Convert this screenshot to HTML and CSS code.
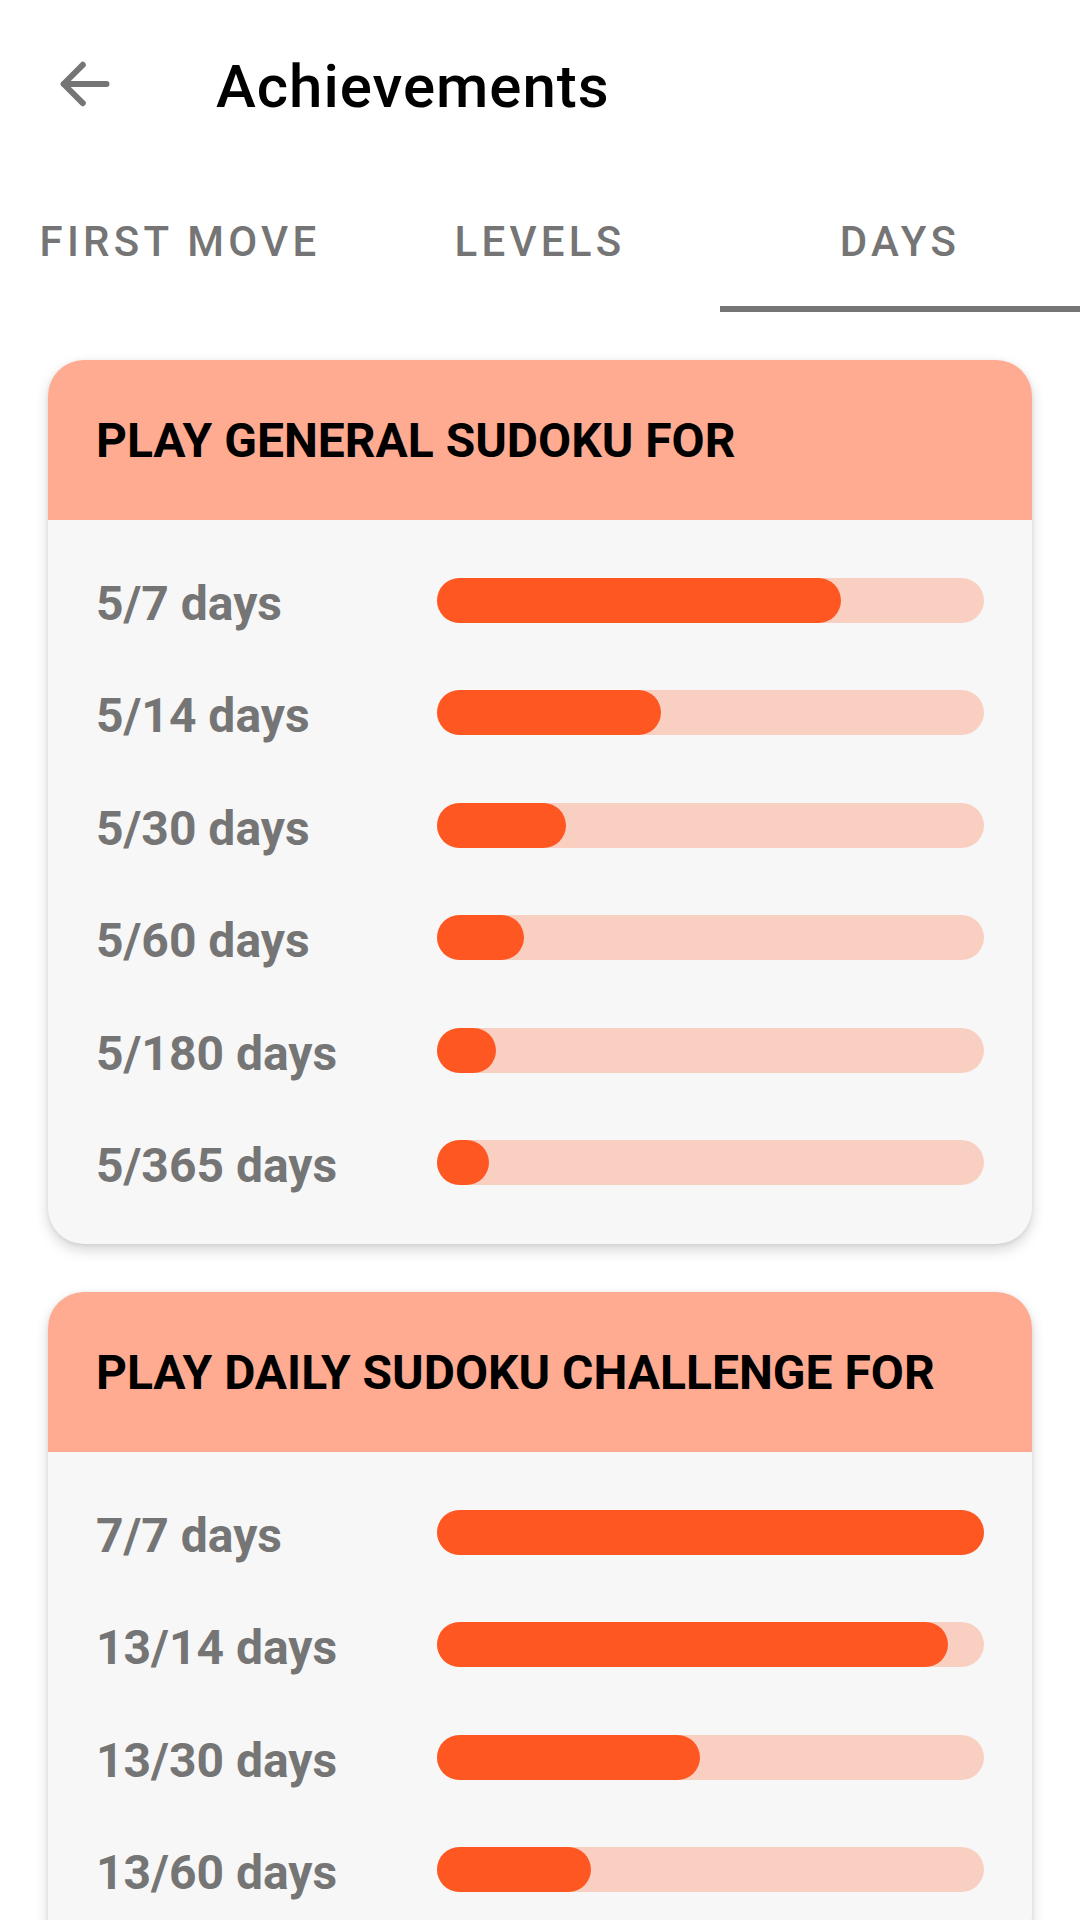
FILE: index.html
```html
<!DOCTYPE html>
<html lang="en">
<head>
    <meta charset="UTF-8">
    <meta name="viewport" content="width=device-width, initial-scale=1.0">
    <link rel="stylesheet" href="styles.css">
    <title>Achievements</title>
</head>
<body>
    <div class="toolbar">
        <div class="back">
            <svg viewBox="0 0 24 24" width="72" height="72">
                <path d="M19.5 12H5.2M11.6 5.6 5.2 12l6.4 6.4" fill="none" stroke="#757575" stroke-width="2" stroke-linecap="round" stroke-linejoin="round"/>
            </svg>
        </div>
        <h1>Achievements</h1>
    </div>

    <div class="tabs">
        <div class="tab">FIRST MOVE</div>
        <div class="tab">LEVELS</div>
        <div class="tab active">DAYS</div>
    </div>

    <div class="content">
        <div class="card">
            <div class="card-header">PLAY GENERAL SUDOKU FOR</div>
            <div class="card-body">
                <div class="row">
                    <span class="label">5/7 days</span>
                    <div class="track"><div class="fill" style="width: calc(45px + (100% - 45px) * 0.7143)"></div></div>
                </div>
                <div class="row">
                    <span class="label">5/14 days</span>
                    <div class="track"><div class="fill" style="width: calc(45px + (100% - 45px) * 0.3571)"></div></div>
                </div>
                <div class="row">
                    <span class="label">5/30 days</span>
                    <div class="track"><div class="fill" style="width: calc(45px + (100% - 45px) * 0.1667)"></div></div>
                </div>
                <div class="row">
                    <span class="label">5/60 days</span>
                    <div class="track"><div class="fill" style="width: calc(45px + (100% - 45px) * 0.0833)"></div></div>
                </div>
                <div class="row">
                    <span class="label">5/180 days</span>
                    <div class="track"><div class="fill" style="width: calc(45px + (100% - 45px) * 0.0278)"></div></div>
                </div>
                <div class="row">
                    <span class="label">5/365 days</span>
                    <div class="track"><div class="fill" style="width: calc(45px + (100% - 45px) * 0.0137)"></div></div>
                </div>
            </div>
        </div>

        <div class="card">
            <div class="card-header">PLAY DAILY SUDOKU CHALLENGE FOR</div>
            <div class="card-body">
                <div class="row">
                    <span class="label">7/7 days</span>
                    <div class="track"><div class="fill" style="width: 100%"></div></div>
                </div>
                <div class="row">
                    <span class="label">13/14 days</span>
                    <div class="track"><div class="fill" style="width: calc(45px + (100% - 45px) * 0.9286)"></div></div>
                </div>
                <div class="row">
                    <span class="label">13/30 days</span>
                    <div class="track"><div class="fill" style="width: calc(45px + (100% - 45px) * 0.4333)"></div></div>
                </div>
                <div class="row">
                    <span class="label">13/60 days</span>
                    <div class="track"><div class="fill" style="width: calc(45px + (100% - 45px) * 0.2167)"></div></div>
                </div>
            </div>
        </div>
    </div>
</body>
</html>
```

FILE: styles.css
```css
body {
    font-family: Roboto, "Noto Sans", sans-serif;
    background-color: #fff;
    margin: 0;
    padding: 0;
    width: 1080px;
    height: 1920px;
    overflow: hidden;
}

.toolbar {
    height: 168px;
    display: flex;
    align-items: center;
}

.back {
    width: 72px;
    height: 72px;
    margin-left: 48px;
}

.back svg {
    display: block;
}

.toolbar h1 {
    margin: 5px 0 0 96px;
    font-size: 60px;
    font-weight: 500;
    letter-spacing: 1px;
    color: #000;
}

.tabs {
    height: 144px;
    display: grid;
    grid-template-columns: 1fr 1fr 1fr;
}

.tab {
    display: flex;
    justify-content: center;
    align-items: center;
    font-size: 42px;
    font-weight: 500;
    letter-spacing: 4.3px;
    color: #757575;
    border-bottom: 6px solid transparent;
    padding-top: 8px;
}

.tab.active {
    border-bottom-color: #757575;
}

.content {
    padding: 48px 48px 0;
}

.card {
    background-color: #f7f7f7;
    border-radius: 36px;
    overflow: hidden;
    margin-bottom: 48px;
    box-shadow: 0 6px 14px rgba(0, 0, 0, 0.16), 0 1px 4px rgba(0, 0, 0, 0.08);
}

.card-header {
    height: 160px;
    background-color: #ffab91;
    display: flex;
    align-items: center;
    padding-left: 48px;
    font-size: 48px;
    font-weight: 700;
    color: #000;
}

.card-body {
    padding: 24px 48px 25px;
}

.row {
    height: 112.5px;
    display: flex;
    align-items: center;
}

.label {
    width: 341px;
    flex-shrink: 0;
    padding-top: 6px;
    font-size: 48px;
    font-weight: 700;
    color: #757575;
}

.track {
    flex: 1;
    height: 45px;
    border-radius: 23px;
    background-color: #f9cfc2;
}

.fill {
    height: 100%;
    border-radius: 23px;
    background-color: #ff5722;
}
```
